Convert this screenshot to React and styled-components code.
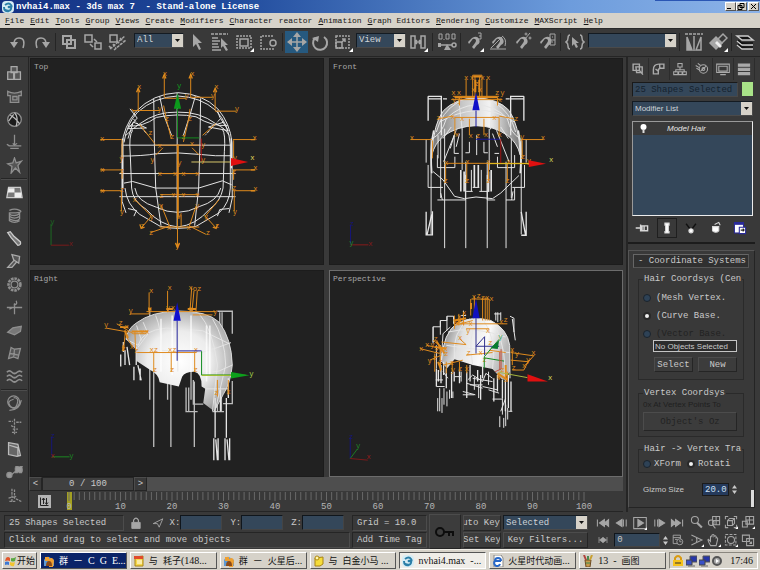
import React from "react";
import styled, { createGlobalStyle, css } from "styled-components";

const mono = '"Liberation Mono", "Noto Sans CJK SC", monospace';
const sans = '"Liberation Sans", Arial, sans-serif';
const serif = '"Liberation Serif", "Noto Sans CJK SC", serif';
const c = {
  panel: "#393939",
  dark: "#212121",
  edge: "#252525",
  lite: "#4c4c4c",
  text: "#c9c9c9",
  field: "#34475a",
  icon: "#a6a6a6",
  chrome: "#d6d2c9",
  wire: "#e6e6e6",
  orange: "#df8a1c",
};

const GlobalStyle = createGlobalStyle`
  *, *::before, *::after { box-sizing: border-box; }
  body { margin: 0; background: ${c.panel}; color: ${c.text}; font: 9px/12px ${mono}; }
  button, input, select { font: inherit; color: inherit; margin: 0; padding: 0; border: 0; border-radius: 0; background: none; min-width: 0; }
  svg { display: block; }
`;

const Page = styled.div`
  min-height: 100vh;
  display: flex;
  flex-direction: column;
`;

/* ---------- window title and menu ---------- */

const TitleBar = styled.header`
  height: 13px;
  display: flex;
  align-items: center;
  gap: 2px;
  padding: 0 1px 0 2px;
  color: #fff;
  font-weight: bold;
  background:
    linear-gradient(#2a56b4, #2a56b4) no-repeat right top / 105px 1px,
    linear-gradient(90deg, #143183 0%, #1f4a9c 30%, #4a78bf 55%, #6d9cdc 75%, #8cb3e8 100%);
`;
const TitleText = styled.h1`
  flex: 1;
  margin: 0;
  font-size: 9px;
  line-height: 12px;
  white-space: pre;
`;
const WindowButton = styled.button`
  width: 11px;
  height: 9px;
  background: ${c.chrome};
  color: #000;
  border: 1px solid;
  border-color: #fff #555 #555 #fff;
  margin-left: ${(p) => (p.$spaced ? 1 : 0)}px;
  margin-right: ${(p) => (p.$spaced ? 0 : -2)}px;
`;
const MenuBar = styled.nav`
  height: 15px;
  display: flex;
  align-items: center;
  gap: 6px;
  padding: 0 5px;
  background: ${c.chrome};
`;
const MenuItem = styled.button`
  color: #151515;
  font-size: 8px;
  line-height: 12px;
  white-space: pre;
  &::first-letter { text-decoration: ${(p) => (p.$plain ? "none" : "underline")}; }
`;

/* ---------- main toolbar ---------- */

const Toolbar = styled.div`
  height: 29px;
  display: flex;
  align-items: center;
  padding: 0 3px 2px 6px;
  background: ${c.panel};
  border-top: 1px solid #2a2a2a;
  border-bottom: 1px solid ${c.edge};
`;
const ToolButton = styled.button`
  flex: none;
  width: ${(p) => (p.$narrow ? 23 : 24)}px;
  height: 22px;
  display: grid;
  place-items: center;
  color: ${c.icon};
  background: ${(p) => (p.$active ? "#26597f" : "transparent")};
`;
const Divider = styled.span`
  flex: none;
  width: 1px;
  height: 18px;
  margin: 0 ${(p) => (p.$wide ? 2 : 1)}px;
  background: ${c.edge};
`;
const ComboWrap = styled.span`
  display: grid;
  flex: ${(p) => (p.$grow ? "1 1 0" : "none")};
  min-width: 0;
  width: ${(p) => (p.$width ? p.$width + "px" : "auto")};
  height: 15px;
  margin: ${(p) => (p.$gap ? "0 0 3px " + p.$gap + "px" : "0")};
  background: ${c.field};
  border: 1px solid;
  border-color: #141b22 #4a4a4a #4a4a4a #141b22;
  & > * { grid-area: 1 / 1; }
`;
const ComboSelect = styled.select`
  appearance: none;
  width: 100%;
  height: 13px;
  padding: 0 12px 0 2px;
  color: #cfd4d8;
  font: ${(p) => (p.$sans ? "8px/12px " + sans : "9px/12px " + mono)};
`;
const ComboArrow = styled.span`
  justify-self: end;
  width: 11px;
  height: 13px;
  display: grid;
  place-items: center;
  color: #111;
  background: ${c.chrome};
  pointer-events: none;
`;

function Combo({ label, value, ...rest }) {
  const { sansText, ...wrap } = rest;
  return (
    <ComboWrap {...wrap}>
      <ComboSelect aria-label={label} $sans={sansText} defaultValue={value}>
        <option>{value}</option>
      </ComboSelect>
      <ComboArrow>
        <svg width="5" height="3" viewBox="0 0 5 3"><path d="M0 0h5L2.5 3z" fill="currentColor" /></svg>
      </ComboArrow>
    </ComboWrap>
  );
}

function Icon({ size = 20, children, flyout, view = 20 }) {
  return (
    <svg width={size} height={size} viewBox={`0 0 ${view} ${view}`} fill="none" stroke="currentColor" strokeWidth="1.5">
      {children}
      {flyout && <path d="M20 16v4h-4z" fill="#fff" stroke="none" />}
    </svg>
  );
}

const magnet = <path d="M4 10l4-4q5-3 7 1t-2 6l-3 4-2-2 3-4q2-3 0-4t-3 1l-3 4z" fill="currentColor" stroke="none" />;
const cursor = <path d="M7 2v13l3-3 3 6 2-1-3-6h4z" fill="currentColor" stroke="none" />;

const tool = {
  undo: <Icon><path d="M15 16q3-10-4-10-5 0-5 6" /><path d="M2 10h8l-4 6z" fill="currentColor" stroke="none" /></Icon>,
  redo: <Icon><path d="M5 16Q2 6 9 6q5 0 5 6" /><path d="M10 10h8l-4 6z" fill="currentColor" stroke="none" /></Icon>,
  link: <Icon><path d="M4 4h8v8H4zM8 8h8v8H8z" strokeWidth="2" /></Icon>,
  unlink: <Icon><path d="M2 3h7v7H2zM12 11h6v6h-6z" /><path d="M11 7l3 3M7 12l3 3" /></Icon>,
  bind: <Icon><path d="M3 3h7v7H3z" /><path d="M3 17l15-13M7 18L19 8M2 14l3 3M6 12l3 4M10 9l3 3M13 6l3 3" strokeDasharray="3 1" /></Icon>,
  pick: <Icon>{cursor}</Icon>,
  byName: <Icon><path d="M1 2h17" strokeDasharray="3 1" /><path d="M2 6h6M2 9h8M2 12h6M2 15h7M2 18h9" /><path d="M11 6v10l2-2 3 5 2-1-3-5h3z" fill="currentColor" stroke="none" /></Icon>,
  region: <Icon flyout><path d="M3 4h14v12H3z" strokeDasharray="2 1" /><path d="M6 7h8v7H6z" /></Icon>,
  crossing: <Icon><path d="M15 4H3v13h13" strokeDasharray="2 1" /><circle cx="15" cy="11" r="3" /></Icon>,
  move: <Icon><path d="M10 3v14M3 10h14" /><path d="M10 0L6 5h8zM10 20l-4-5h8zM0 10l5-4v8zM20 10l-5-4v8z" fill="currentColor" stroke="none" /></Icon>,
  rotate: <Icon><path d="M14 5A7 7 0 1 1 5 6" strokeWidth="2" /><path d="M2 6l7-2-1 6z" fill="currentColor" stroke="none" /></Icon>,
  scale: <Icon flyout><path d="M3 4h13v12H3z" strokeDasharray="2 1" /><path d="M3 10h6v6H3zM8 11l4-4M12 10V7H9" /></Icon>,
  pivot: <Icon flyout><path d="M3 4h4v12H3zM13 4h4v12h-4zM7 10h6M9 8l-2 2 2 2M11 8l2 2-2 2" /></Icon>,
  manip: <Icon><path d="M2 2h3v5H2zM9 2h3v5H9zM15 2h3v5h-3zM7 7v1" strokeWidth="1" /><path d="M2 13h16" /><circle cx="17" cy="13" r="2" fill={c.panel} /><path d="M7 18l3-6 4 6zM1 11h3v4H1z" fill="currentColor" stroke="none" /></Icon>,
  snap: <Icon flyout><g>{magnet}</g><path d="M14 1h3v3h-2M17 4v3h-3" strokeWidth="1" /></Icon>,
  angle: <Icon>{magnet}<path d="M2 17h16M14 4q5 3 3 10M3 16L14 5" strokeWidth="1" /></Icon>,
  percent: <Icon>{magnet}<path d="M13 7l5-6" strokeWidth="1" /><circle cx="14" cy="2" r="1" strokeWidth="1" /><circle cx="18" cy="6" r="1" strokeWidth="1" /></Icon>,
  spinner: <Icon>{magnet}<path d="M14 2h5v11h-5zM14 8h5M16 5h1M16 10h1" strokeWidth="1" /></Icon>,
  named: <Icon><path d="M5 3Q3 3 3 6t-2 4q2 1 2 4t2 3M15 3q2 0 2 3t2 4q-2 1-2 4t-2 3" /><path d="M7 5v9l2-2 2 4 2-1-2-4h3z" fill="currentColor" stroke="none" /></Icon>,
  mirror: <Icon><path d="M1 2h18" strokeDasharray="3 1" /><path d="M10 4v15" /><path d="M3 5v13h5z" fill="currentColor" /><path d="M17 5v13h-5z" /></Icon>,
  align: <Icon flyout><path d="M2 11l6-6 6 6-6 6z" fill="currentColor" /><path d="M9 8l6-6 4 4-6 6z" /><path d="M7 11l5 5 2-2-5-5z" fill="#eee" stroke="none" /></Icon>,
  layers: <Icon><path d="M2 4h11l5 4H7zM2 9l5 4h11M2 13l5 4h11" fill="#111" stroke="#ccc" /><path d="M3 8l4 3h11M3 12l4 3h11" stroke="#111" /></Icon>,
};

/* ---------- workspace ---------- */

const Workspace = styled.main`
  flex: 1;
  display: flex;
  min-height: 0;
`;
const SideBar = styled.aside`
  flex: none;
  width: 29px;
  padding-top: 5px;
  display: flex;
  flex-direction: column;
  align-items: center;
  border-right: 1px solid ${c.edge};
  border-bottom: 1px solid ${c.edge};
`;
const SideButton = styled.button`
  width: 24px;
  height: 23px;
  display: grid;
  place-items: center;
  color: #8f8f8f;
`;
const SideDivider = styled.span`
  width: 26px;
  height: 2px;
  margin: 1px 0;
  border-top: 1px solid ${c.edge};
  border-bottom: 1px solid ${c.lite};
`;
const side = [
  ["Rigid bodies", <path d="M6 2h7v7H6zM2 8h7v9H2zM10 8h7v9h-7z" fill="#555" stroke="#aaa" />],
  ["Cloth", <path d="M2 4q8 4 16 0v5h-3v8H5V9H2zM8 10h5v4H8z" fill="#4a4a4a" />],
  ["Soft body", <><circle cx="10" cy="10" r="8" fill="#1b1b1b" /><path d="M10 2q5 5 2 16M5 5q5 2 11 10M3 12l6-8" stroke="#bbb" /></>],
  ["Rope", <path d="M10 1v13M3 14h15M5 17h10M8 11q2 3 5 0M1 12l3 2" />],
  ["Deforming mesh", <path d="M10 1l2 6 6-2-4 5 2 8-5-5-5 6 1-8-5-3 6-1z" fill="#555" />],
  null,
  ["Plane", <><path d="M3 4h14l2 12H1z" fill="#777" stroke="#ccc" /><path d="M3 5h7v5H2zM10 10h8v6h-8z" fill="#eee" stroke="none" /></>],
  ["Spring", <path d="M4 4q6-3 12 0t-12 3q0 3 6 3t6-4v8q-4 4-12 0M4 7v9q6 4 12 0M4 11q6 4 12 0" />],
  ["Dashpot", <path d="M2 3l3-1 4 5 8 7q1 4-3 4L6 9z" fill="#777" stroke="#ccc" />],
  ["Linear dashpot", <path d="M7 2l9 2-1 8-6-4zM10 8l-8 9h5l6-7" fill="#555" stroke="#aaa" />],
  ["Motor", <><circle cx="10" cy="10" r="7" strokeWidth="3" strokeDasharray="3 1" /><circle cx="10" cy="10" r="4" /></>],
  ["Wind", <path d="M1 10h18M10 5v13M12 2q2 5-3 5M4 12l4-2" />],
  ["Toy car", <path d="M2 12l6-5 10-2-1 6-7 4-5-2z" fill="#777" />],
  ["Fracture", <path d="M6 3l4 2 7-1-3 12-5-2-6 2zM5 10l10 2M10 5l-1 10" fill="#555" />],
  ["Water", <path d="M1 5q3-3 6 0t6 0 6 0M1 10q3-3 6 0t6 0 6 0M1 15q3-3 6 0t6 0 6 0" strokeWidth="2" />],
  null,
  ["Constraint solver", <><circle cx="9" cy="8" r="7" /><path d="M9 3q7 0 4 8t-8 2 4-8M4 18q12 0 14-12" /></>],
  ["Ragdoll", <path d="M10 1v18M3 4h5M12 5h6M6 9l4 2M8 13h6M7 17h6" strokeDasharray="3 1" />],
  ["Hinge", <path d="M3 2l11 2 3 13-4 1-10-2zM4 5l10 3v9" fill="#666" stroke="#bbb" />],
  ["Point to point", <><path d="M6 13l7-6" /><circle cx="4" cy="13" r="3" fill="#999" /><path d="M11 3h8v7h-8z" fill="#999" strokeDasharray="4 1" /></>],
  ["Prismatic", <path d="M7 2v16M10 3v10l8 4M3 13l9-2M4 17h7" strokeDasharray="3 1" />],
];

const Center = styled.section`
  flex: 1;
  min-width: 0;
  display: flex;
  flex-direction: column;
`;
const ViewGrid = styled.div`
  flex: 1;
  min-height: 0;
  display: grid;
  grid-template-columns: repeat(2, minmax(0, 1fr));
  grid-template-rows: repeat(2, minmax(200px, 1fr));
  gap: 5px;
  padding: 1px 0 0 1px;
`;
const Viewport = styled.figure`
  position: relative;
  contain: size;
  margin: 0;
  display: flex;
  background: ${c.dark};
  border: 1px solid ${(p) => (p.$active ? "#6c6c6c" : "#1c1c1c")};
`;
const ViewLabel = styled.figcaption`
  position: absolute;
  top: 2px;
  left: 3px;
  font-size: 8px;
  line-height: 12px;
  color: #a8a8a8;
`;
const Scene = styled.svg`
  flex: 1;
  min-width: 0;
  height: 100%;
  text { font: 22px ${mono}; stroke: none; }
`;

const Wire = ({ d, w = 3, ...rest }) => <path d={d} fill="none" stroke={c.wire} strokeWidth={w} {...rest} />;
const Orange = ({ d, w = 3 }) => <path d={d} fill="none" stroke={c.orange} strokeWidth={w} />;
const Marks = ({ list }) =>
  list.map(([x, y, t], i) => <text key={i} x={x} y={y} textAnchor="middle" fill={c.orange}>{t}</text>);
const Corner = ({ x, y, up, right, upColor, rightColor, upText, rightText }) => (
  <g>
    <path d={`M${x} ${y}v-${up}`} stroke={upColor} strokeWidth="3" />
    <path d={`M${x} ${y}h${right}`} stroke={rightColor} strokeWidth="3" />
    <text x={x + 4} y={y - up + 2} textAnchor="middle" fill={upColor}>{upText}</text>
    <text x={x + right + 6} y={y + 3} textAnchor="middle" fill={rightColor}>{rightText}</text>
  </g>
);

function TopScene() {
  return (
    <Scene viewBox="93 9 879 621" role="img" aria-label="Top wireframe">
      <Wire d="M378 475L366 440V270Q370 215 408 168Q460 114 535 111Q610 114 656 160Q694 205 699 262L700 430L690 475" />
      <Wire w={5} d="M368 250V400M697 250V340" />
      <Wire d="M372 262Q380 205 413 170Q465 124 535 121Q605 124 650 165Q690 205 694 270V400" />
      <Wire d="M378 240Q395 222 420 205Q470 168 535 170Q600 168 650 205Q680 220 690 240" />
      <Wire d="M384 212Q430 215 470 186Q535 172 590 184Q640 215 686 210" />
      <Wire d="M398 225Q386 240 391 300L395 400Q398 440 440 465Q480 512 535 518Q590 512 630 465Q665 440 672 400L676 290Q680 235 670 222" />
      <Wire d="M375 400Q380 450 420 480L482 516Q535 528 590 516L660 475Q692 445 694 400" />
      <Wire d="M405 400Q410 440 470 458Q535 490 600 456Q655 440 665 400" />
      <Wire d="M462 130L464 270L468 400L484 514M604 128L602 270L598 400L586 514M533 112V525" />
      <Wire d="M480 122L492 178L516 240M588 122L572 178L552 240" />
      <Wire d="M365 270H698M362 303Q430 303 470 296Q535 290 600 298Q650 304 696 302M358 356H710M358 426H710" />
      <Wire d="M372 385L398 380L468 400H598L670 378L698 390" />
      <Wire d="M390 160L412 188L384 220L440 218L400 200L384 250M655 165L662 185L688 226L628 215L675 200M384 462L410 468L402 485M655 485L662 465L690 462" />
      <Wire d="M400 190L445 240M664 190L618 240" strokeDasharray="12 4" />
      <Orange d="M415 165V100M398 165H480M494 125V62M494 128H560M574 125V62M574 125H640M648 165V105M648 167H712M395 160L405 172" />
      <Orange d="M365 253H306M365 345H306M365 408H306M702 253H768M702 345H768M702 408H768M366 255V310M366 345V372M364 408V470M704 255V310M704 345V375M706 408V470" />
      <Orange d="M492 150L500 190L515 250M572 160L566 200L552 260M465 270H600M468 300L490 278M600 300L578 278M420 208L465 265M650 205L610 240" />
      <Orange w={6} d="M535 268V490" />
      <Orange d="M478 356H600M482 420H600M534 480V575M405 435L455 485L425 520M660 435L618 485L650 520M484 450L510 515L452 535M590 455L570 515L620 540M480 518H600M545 515V480" />
      <Orange d="M410 110l5-12 5 12M489 68l5-12 5 12M569 68l5-12 5 12M643 110l5-12 5 12M300 253h14M300 345h14M300 408h14M756 253h14M756 345h14M756 408h14M528 566l6 14 6-14M420 510l4 12 10-4M655 510l-4 12-10-4" w={4} />
      <Marks list={[[418,100,"x"],[496,60,"x"],[579,60,"x"],[652,100,"x"],[480,168,"y"],[562,126,"y"],[641,126,"y"],[714,168,"y"],[306,256,"x"],[306,350,"x"],[306,414,"x"],[768,254,"x"],[770,346,"x"],[770,410,"x"],[364,318,"y"],[366,478,"y"],[708,314,"y"],[708,478,"y"],[502,198,"z"],[572,198,"z"],[452,240,"z"],[518,250,"z"],[552,252,"z"],[480,278,"x"],[578,272,"x"],[612,276,"y"],[458,322,"y"],[612,322,"y"],[540,330,"y"],[480,362,"x"],[526,362,"x"],[552,362,"x"],[594,362,"x"],[485,430,"z"],[522,428,"x"],[552,428,"x"],[594,428,"x"],[404,442,"x"],[484,460,"y"],[594,460,"y"],[456,494,"y"],[620,494,"y"],[428,522,"z"],[654,522,"z"],[454,542,"z"],[626,542,"z"],[508,526,"x"],[568,526,"x"],[534,582,"y"],[540,488,"y"],[366,354,"z"],[706,356,"z"],[366,412,"z"],[706,406,"z"]]} />
      <path d="M534 246V160M534 248H600" stroke="#138a1d" strokeWidth="3" />
      <path d="M534 112l11 48h-22z" fill="#0c9a1c" />
      <text x="539" y="96" textAnchor="middle" fill="#10a020">y</text>
      <path d="M606 320V250" stroke="#b01010" strokeWidth="3" />
      <path d="M576 321H694" stroke="#d8c76a" strokeWidth="3" />
      <path d="M748 321l-52-12v24z" fill="#e01010" />
      <text x="761" y="316" textAnchor="middle" fill="#e6dc5c">x</text>
      <Corner x={151} y={573} up={65} right={54} upColor="#1c6a22" rightColor="#7a1a1a" upText="y" rightText="x" />
    </Scene>
  );
}

function FrontScene() {
  return (
    <Scene viewBox="12 9 876 621" role="img" aria-label="Front shaded view">
      <defs>
        <linearGradient id="capFront" x1="0" x2="1">
          <stop offset="0" stopColor="#777" /><stop offset=".35" stopColor="#c8c8c8" /><stop offset=".65" stopColor="#f2f2f2" /><stop offset="1" stopColor="#777" />
        </linearGradient>
      </defs>
      <path d="M316 300Q322 200 352 165Q385 130 450 126Q520 130 550 165Q580 205 584 300Q575 262 545 240Q505 212 450 211Q395 212 352 242Q325 265 316 300z" fill="url(#capFront)" />
      <Wire d="M316 300Q322 200 352 165Q385 130 450 126Q520 130 550 165Q580 205 584 300M316 250Q345 240 360 190Q400 150 450 148Q510 150 545 190Q555 235 584 250M330 230Q345 170 395 140M570 230Q555 170 505 140M398 134L408 222M500 134L494 222M340 200Q390 170 450 165T566 200" />
      <Wire d="M316 300Q325 265 352 242Q395 212 450 211Q505 212 545 240Q575 262 584 300" />
      <Wire w={4} d="M305 122H345V240M305 130H345M350 130H362M305 122V196M595 122H555V240M595 130H555M552 130H540M595 122V196" />
      <Wire d="M299 252V323M602 252V323M305 330V398H350M597 330V398H560M335 240V310M333 300V338H386V305M567 300V338H515V305M314 250V540M587 250V540M343 250V430M557 250V430" />
      <Wire w={5} d="M322 225Q310 280 316 355M578 225Q590 280 584 355" />
      <Wire d="M355 220V582M419 320V582M484 320V582M541 320V582M320 350L350 375L385 425L415 432L450 427L500 432L525 415L580 362" />
      <Wire d="M333 436H418V360M343 415L348 436M484 360V436H508M541 436H567V400M562 410L558 436" />
      <Wire w={5} d="M404 345V410M496 345V410M445 330V398M457 330V398M414 350V410M488 350V410" />
      <Wire d="M436 345V410M466 345V410M420 410H440M460 410H490M440 398H460M350 250L375 215M548 250L525 215M352 320L390 225M550 320L512 225M408 220V345M490 220V345M372 280L384 240L384 295H398M430 260V293H418M474 260V293H486M520 295H506M400 235L390 275M500 235L515 275M452 240V300" />
      <Wire w={4} d="M299 472V542H318V470M302 540L316 480M587 472L600 542M602 472V543H587" />
      <Orange d="M420 122V70M440 125V58H468V125M483 122V70M447 125V60M461 125V60M380 122H520M375 132H530M385 186H520M400 125V150M515 125V150M335 190L380 182M565 190L520 182M316 253H252M588 253H655M318 256V310M590 256V310M360 325H610M358 325V380M422 325V380M488 325V380M545 325V380M386 186V240M430 190V240M474 190V240M520 186V240" />
      <Orange w={6} d="M385 125H515M442 62H466M448 72V110M460 72V110" />
      <Marks list={[[420,72,"x"],[487,72,"x"],[382,118,"x"],[398,118,"x"],[384,138,"y"],[400,138,"y"],[514,118,"z"],[530,118,"y"],[522,138,"x"],[438,74,"x"],[470,74,"x"],[452,90,"z"],[462,108,"x"],[442,108,"x"],[256,254,"x"],[653,254,"x"],[590,252,"y"],[336,194,"z"],[380,192,"x"],[408,196,"x"],[506,194,"x"],[572,196,"z"],[392,244,"x"],[434,248,"x"],[456,248,"z"],[480,246,"x"],[522,246,"x"],[360,330,"x"],[424,328,"x"],[488,328,"x"],[548,328,"x"],[610,324,"y"],[358,386,"z"],[423,386,"z"],[488,386,"z"],[545,386,"z"],[592,312,"z"]]} />
      <path d="M450 215V165M450 252H522" stroke="#1818a0" strokeWidth="3" />
      <path d="M450 110l11 54h-22z" fill="#1010c8" />
      <path d="M525 325V252" stroke="#a01010" strokeWidth="3" />
      <path d="M488 326H612" stroke="#e8c21c" strokeWidth="3" />
      <path d="M662 326l-52-10v20z" fill="#e01010" />
      <text x="678" y="320" textAnchor="middle" fill="#d8dc5c">x</text>
      <Corner x={70} y={572} up={58} right={54} upColor="#14147a" rightColor="#8a1a1a" upText="z" rightText="x" />
      <text x="73" y="571" textAnchor="middle" fill="#1c8a2a">y</text>
    </Scene>
  );
}

function RightScene() {
  return (
    <Scene viewBox="93 15 879 621" role="img" aria-label="Right shaded view">
      <defs>
        <radialGradient id="capRight" cx=".5" cy=".5" r=".6">
          <stop offset="0" stopColor="#fff" /><stop offset=".5" stopColor="#ececec" /><stop offset=".85" stopColor="#b0b0b0" /><stop offset="1" stopColor="#858585" />
        </radialGradient>
      </defs>
      <Wire w={4} d="M450 130V405M504 130V405M575 130V405M462 320V548M514 320V548M585 350V548M560 368V441H595M568 368V440M582 345V418H612M655 137H700V205M662 140V205M669 140V205M700 348V417H672M640 441H675M655 380V441M667 385V441" stroke="#bdbdbd" />
      <path d="M378 222Q382 190 410 172Q455 138 535 136Q625 136 660 170Q698 220 700 300Q695 355 672 390L645 440L612 415L618 372L607 365Q608 325 585 320Q556 320 548 335L538 365L480 352Q478 328 448 313L410 288V255z" fill="url(#capRight)" />
      <Wire d="M378 222Q382 190 410 172Q455 138 535 136Q625 136 660 170Q698 220 700 300Q695 355 672 390L645 440M378 222L415 240Q425 195 500 188L610 196L690 235M468 150Q485 190 485 255M535 136V320M600 145Q640 190 655 300L640 440M640 160Q678 220 680 300L650 430M410 262H480M480 255L607 262L655 247L696 232M607 325L660 318L700 300M618 372L690 372M430 170L445 205L415 245M410 180L425 225" opacity=".9" />
      <Wire w={5} d="M484 160V320M518 150V330M575 150V320M632 180V330M622 180V350" stroke="#fff" opacity=".7" />
      <Wire w={4} d="M370 230V260M362 268V304M375 255V300M381 245L389 300M402 305V346M409 245V300M414 300L424 346M421 310V346M648 400V520M644 522V588M650 525L655 588M657 522V588M682 400V520M678 522V588M684 525L690 588M692 522V588M688 340V400M664 375V440" />
      <Orange d="M448 145V80M504 140V75M572 135L577 65M578 137L584 75M590 137L594 75M448 145H390M385 200L318 188M440 138H650M580 148H640M376 200L370 258M405 200L407 255M350 175L400 205L440 205M412 262H592M462 262V320M515 262V320M586 262V320M380 215L395 240M655 345V395M688 345V390" />
      <Orange w={6} d="M374 195L384 218M565 130H590M370 240V255M445 130H455M500 130H520M360 185H385M395 198H445" />
      <Marks list={[[454,82,"x"],[510,72,"x"],[574,72,"x"],[587,76,"o"],[600,76,"z"],[392,142,"y"],[318,186,"y"],[362,178,"z"],[380,192,"x"],[370,256,"z"],[396,250,"x"],[450,136,"x"],[506,134,"y"],[520,132,"x"],[575,136,"x"],[648,144,"y"],[428,206,"x"],[442,206,"x"],[410,262,"z"],[456,260,"x"],[469,260,"z"],[512,260,"x"],[525,260,"z"],[590,260,"x"],[466,320,"z"],[518,320,"z"],[589,320,"z"],[688,388,"x"],[652,392,"z"]]} />
      <path d="M533 287V165M533 257H607" stroke="#22229a" strokeWidth="3" />
      <path d="M533 110l11 56h-22z" fill="#1010d0" />
      <path d="M607 258V330H700" stroke="#0d8a1d" strokeWidth="3" fill="none" />
      <path d="M607 331H740" stroke="#a8c020" strokeWidth="3" />
      <path d="M752 331l-56-10v20z" fill="#0ca01c" />
      <text x="758" y="332" textAnchor="middle" fill="#a8d84c">y</text>
      <Corner x={153} y={578} up={60} right={54} upColor="#16167a" rightColor="#1c8a22" upText="z" rightText="y" />
      <text x="156" y="580" textAnchor="middle" fill="#9a1a1a">x</text>
    </Scene>
  );
}

function PerspectiveScene() {
  return (
    <Scene viewBox="12 15 876 621" role="img" aria-label="Perspective shaded view">
      <defs>
        <linearGradient id="capPersp" x1="0" x2="1" y2=".3">
          <stop offset="0" stopColor="#6c6c6c" /><stop offset=".35" stopColor="#e0e0e0" /><stop offset=".7" stopColor="#fafafa" /><stop offset="1" stopColor="#b8b8b8" />
        </linearGradient>
      </defs>
      <path d="M345 290Q350 200 395 172Q440 150 495 165Q545 190 552 240L553 320L530 345L500 312L440 300L385 282L362 310z" fill="url(#capPersp)" />
      <Wire d="M345 290Q350 200 395 172Q440 150 495 165Q545 190 552 240L553 340M360 240Q420 250 552 262M385 282Q375 200 430 160M440 300Q425 220 450 160M500 312Q515 220 470 160M365 200Q440 180 540 215M372 185L350 205L345 290M535 345Q545 260 510 185" />
      <Wire d="M320 230V184H342V165H362V152H382M320 184V235M342 165V208M362 152V195M382 152V175M412 135V175M405 150H420M510 140V165M516 140V170M525 140V165M505 145H525M553 152L565 158V200M560 160L569 225M330 240V310M342 240V320" />
      <Wire w={4} d="M330 310V365M336 315V350M344 300V355M360 310V370M352 290V330M376 320V400M384 320V350M400 310V355M422 320V400M432 300V350M455 315V350M464 330V405M470 300V340M504 340V410M515 330V380M530 345V400M539 340V440M548 330V430M556 350V440" />
      <Wire d="M334 400V440M340 370V440M347 400V445M353 370V420M362 380V425M370 375V402M380 380V400M522 455V488M530 400V450M534 460V490M540 420V485M546 430V465M328 345H350M330 365H355M410 380L448 390M422 355L470 370M440 340L500 350M470 365L515 375M500 403H530M425 345L440 330L470 350L480 325L500 340M385 335H405M405 320V350" />
      <Wire d="M410 390H445M432 360H470M488 375L520 385M445 335V375M458 360V400M488 320V360M365 340L350 320M525 440L540 400M548 440H560" />
      <Orange d="M434 150V100M445 150V92M470 165V95M478 165V95M484 165V95M490 165V100M436 100H490M385 190V150M398 180V145M412 180V140M385 180L440 165M400 175L545 175M420 190H490M280 250L340 265M300 240L345 250M320 225L345 245M310 285L345 270M325 265V320M342 250V320M360 290V325M378 290V320M400 290V320M422 300V325M345 230L420 238L400 220M350 300L410 285M420 270L470 265L500 262M555 262L625 272M555 285L610 290M560 315L595 315L610 285M600 300L628 268M560 255V300M545 320V350M520 320V345M490 255L540 262" />
      <Orange w={6} d="M330 228L355 265M325 245L360 250M385 165L420 158M335 290L345 315M435 112V130M540 300V340M515 325L545 345M390 175L405 165" />
      <Marks list={[[444,100,"x"],[458,98,"z"],[471,102,"z"],[484,102,"x"],[497,106,"x"],[386,172,"y"],[400,160,"x"],[414,148,"x"],[410,178,"x"],[434,182,"x"],[426,204,"y"],[486,204,"x"],[526,176,"x"],[540,170,"z"],[284,258,"x"],[302,244,"x"],[318,246,"y"],[328,228,"z"],[330,262,"z"],[344,264,"x"],[358,256,"x"],[326,284,"z"],[310,294,"y"],[342,298,"z"],[360,272,"z"],[376,300,"z"],[380,320,"y"],[402,318,"z"],[422,318,"x"],[402,224,"x"],[428,270,"z"],[464,270,"x"],[476,292,"z"],[494,238,"z"],[560,260,"x"],[574,272,"y"],[624,270,"x"],[608,290,"y"],[596,308,"x"],[564,316,"z"],[530,322,"z"],[518,342,"x"],[540,352,"z"]]} />
      <path d="M450 265V158M450 243H520M450 243L476 214V270" stroke="#30308c" strokeWidth="3" fill="none" />
      <path d="M450 98l11 60h-22z" fill="#1010c0" />
      <path d="M475 310V275L500 245L520 222M475 278L535 288" stroke="#10881c" strokeWidth="3" fill="none" />
      <path d="M520 225l-4 26-22-2z" fill="#067a30" />
      <path d="M526 252V312L508 320M522 260V315" stroke="#c05040" strokeWidth="3" fill="none" />
      <path d="M520 322L606 338" stroke="#a8b840" strokeWidth="3" />
      <path d="M668 350l-62-22v22z" fill="#e01010" />
      <text x="675" y="345" textAnchor="middle" fill="#d8dc5c">x</text>
      <text x="524" y="220" textAnchor="middle" fill="#30a048">y</text>
      <path d="M69 583V520" stroke="#16167a" strokeWidth="3" />
      <path d="M69 583L90 555" stroke="#1c7a26" strokeWidth="3" />
      <path d="M69 583L122 588" stroke="#7a1a1a" strokeWidth="3" />
      <text x="72" y="524" textAnchor="middle" fill="#16167a">z</text>
      <text x="93" y="552" textAnchor="middle" fill="#1c8a26">y</text>
      <text x="125" y="584" textAnchor="middle" fill="#9a1a1a">x</text>
    </Scene>
  );
}

/* ---------- time slider and track bar ---------- */

const TimeRow = styled.div`
  height: 14px;
  display: flex;
  background: #4e4e4e;
`;
const TimeStep = styled.button`
  width: 13px;
  background: ${c.panel};
  border: 1px solid;
  border-color: ${c.lite} ${c.edge} ${c.edge} ${c.lite};
`;
const TimeThumb = styled.output`
  width: 92px;
  text-align: center;
  line-height: 12px;
  background: #404040;
  border: 1px solid ${c.edge};
`;
const TimeTrack = styled.input`
  appearance: none;
  flex: 1;
  &::-webkit-slider-thumb { appearance: none; width: 1px; height: 1px; }
`;
const TrackBar = styled.div`
  height: 21px;
  display: flex;
  align-items: flex-start;
  gap: 18px;
  padding: 0 39px 0 9px;
  border-bottom: 1px solid ${c.edge};
`;
const CurveButton = styled.button`
  flex: none;
  width: 13px;
  height: 13px;
  margin-top: 4px;
  display: grid;
  place-items: center;
  color: #222;
  background: #b4b4b4;
`;
const Ruler = styled.svg`
  flex: 1;
  min-width: 0;
  height: 20px;
  overflow: visible;
  text { font: 9px ${mono}; fill: #b5b5b5; }
`;

function TrackRuler() {
  return (
    <Ruler role="img" aria-label="Frames 0 to 100">
      <rect x="-2" y="1" width="5" height="18" fill="#a3a022" />
      {Array.from({ length: 101 }, (_, i) => (
        <line key={i} x1={`${i}%`} x2={`${i}%`} y1="1" y2={i % 10 === 0 ? 10 : 9} stroke="#686868" />
      ))}
      {Array.from({ length: 11 }, (_, i) => (
        <text key={i} x={`${i * 10}%`} y="18" textAnchor="middle">{i * 10}</text>
      ))}
    </Ruler>
  );
}

/* ---------- command panel ---------- */

const CommandPanel = styled.aside`
  flex: none;
  width: 134px;
  margin-left: 3px;
  padding: 1px 5px 0 0;
  border-left: 2px solid ${c.edge};
  display: flex;
  flex-direction: column;
`;
const Tabs = styled.div`
  display: grid;
  grid-template-columns: repeat(6, 1fr);
  height: 22px;
`;
const Tab = styled.button`
  display: grid;
  place-items: center;
  color: #aaa;
  border-right: 1px solid #2c2c2c;
`;
const ObjectRow = styled.div`
  display: flex;
  gap: 4px;
  padding: 2px 2px 0 4px;
`;
const NameInput = styled.input`
  flex: 1;
  height: 15px;
  padding: 0 2px;
  color: #15222e;
  background: ${c.field};
  border: 1px solid;
  border-color: #1a1a1a #484848 #484848 #1a1a1a;
`;
const Swatch = styled.button`
  width: 11px;
  height: 14px;
  background: #a9e388;
`;
const Padded = styled.div`
  padding: 4px 2px 0 4px;
  display: grid;
`;
const StackList = styled.ul`
  height: 95px;
  margin: 5px 2px 0 4px;
  padding: 0;
  list-style: none;
  background: ${c.field};
  border: 1px solid;
  border-color: #999 #ececec #ececec #999;
`;
const StackItem = styled.li`
  height: 13px;
  display: flex;
  align-items: center;
  padding-left: 7px;
  gap: 20px;
  font: italic 8px/12px ${sans};
  color: #e4e4e4;
  background: ${c.panel};
`;
const StackTools = styled.div`
  display: flex;
  justify-content: space-between;
  padding: 2px 5px 0 4px;
  height: 28px;
  border-bottom: 2px solid #1c1c1c;
`;
const StackTool = styled.button`
  width: 20px;
  height: 20px;
  display: grid;
  place-items: center;
  color: #d8d8d8;
  border: 1px solid ${(p) => (p.$on ? "#1f1f1f" : "transparent")};
`;
const RolloutArea = styled.div`
  flex: 1;
  display: flex;
  align-items: flex-end;
  margin: 6px 0 4px;
  border: 1px solid;
  border-color: #555 #242424 #242424 #555;
`;
const Rollout = styled.section`
  flex: 1;
  min-width: 0;
  align-self: stretch;
  padding: 3px 2px 0 4px;
`;
const RolloutTitle = styled.button`
  width: 100%;
  height: 14px;
  padding-left: 4px;
  text-align: left;
  line-height: 12px;
  white-space: pre;
  overflow: hidden;
  background: #303030;
  border: 1px solid;
  border-color: #666 #555 #555 #666;
`;
const Group = styled.fieldset`
  min-width: 0;
  margin: ${(p) => p.$top}px 5px 0;
  padding: 0 6px ${(p) => p.$bottom}px 4px;
  border: 1px solid #2a2a2a;
  display: flex;
  flex-direction: column;
`;
const Legend = styled.legend`
  padding: 0 1px;
  white-space: nowrap;
  line-height: 12px;
`;
const Choices = styled.div`
  display: flex;
  flex-direction: ${(p) => (p.$inline ? "row" : "column")};
  gap: 6px;
  padding-top: ${(p) => (p.$inline ? 3 : 7)}px;
`;
const Choice = styled.label`
  display: flex;
  align-items: center;
  gap: ${(p) => (p.$tight ? 3 : 5)}px;
  line-height: 12px;
  white-space: nowrap;
  color: ${(p) => (p.$off ? "#222" : c.text)};
`;
const Radio = styled.input`
  appearance: none;
  flex: none;
  width: 8px;
  height: 8px;
  border-radius: 50%;
  border: 1px solid #1a232c;
  background: #2e4256;
  &:checked { border: 2px solid #292929; background: #f0f0f0; }
`;
const PickedInput = styled.input`
  width: 84px;
  height: 12px;
  align-self: flex-end;
  padding: 0 1px;
  font: 8px/10px ${sans};
  background: #2c2c2c;
  border: 1px solid #c4c4c4;
`;
const ButtonPair = styled.div`
  display: grid;
  grid-template-columns: 1fr 1fr;
  gap: 5px;
  margin: 5px 0 0 11px;
`;
const bevel = css`
  background: #3c3c3c;
  border: 1px solid;
  border-color: ${c.lite} ${c.edge} ${c.edge} ${c.lite};
`;
const PushButton = styled.button`
  ${bevel}
  height: ${(p) => (p.$tall ? 19 : 15)}px;
  line-height: 12px;
  padding: 0 1px;
  color: ${(p) => (p.disabled ? "#232323" : c.text)};
  white-space: nowrap;
  overflow: hidden;
`;
const SmallNote = styled.span`
  margin-bottom: 1px;
  font: 8px/12px ${sans};
  color: #202020;
  white-space: nowrap;
`;
const GizmoRow = styled.label`
  display: flex;
  align-items: center;
  margin: 10px 12px 0 10px;
  font: 8px/12px ${sans};
`;
const GizmoInput = styled.input`
  width: 27px;
  height: 13px;
  margin-left: auto;
  margin-right: 3px;
  padding-left: 2px;
  font: 9px/12px ${mono};
  color: #cfe0f4;
  background: #253a5c;
  border: 1px solid #1b1b1b;
`;
const ScrollThumb = styled.span`
  width: 3px;
  height: 17px;
  background: #dcdcdc;
`;

const Spin = () => (
  <svg width="5" height="9" viewBox="0 0 5 9" fill={c.text}><path d="M0 3.5h5L2.5 0zM0 5.5h5L2.5 9z" /></svg>
);

const tabIcons = [
  ["Create", <path d="M3 3h9v9H3zM7 7h9v8H8zM12 12l5 6" strokeWidth="2" />],
  ["Modify", <path d="M2 16v-5q0-8 8-8h7v6h-5q-3 0-3 4v4H2zM5 10l4 3M11 4v5" strokeWidth="2" />],
  ["Hierarchy", <path d="M7 2h6v5H7zM10 7v5M4 15v-4h12v4M1 14h6v4H1zM8 14h5v4H8zM14 14h5v4h-5z" />],
  ["Motion", <><circle cx="12" cy="10" r="6" /><circle cx="12" cy="10" r="2" /><path d="M1 5l5 3M2 9l4 2M4 2l4 3M8 13l8-7" /></>],
  ["Display", <path d="M1 3h18v12H1zM4 6h12v7H4zM6 18h8" />],
  ["Utilities", <path d="M2 3h16v3H2zM2 9h16v3H2zM2 15h16v3H2z" fill="currentColor" />],
];

/* ---------- status area ---------- */

const StatusArea = styled.footer`
  flex: none;
  height: 37px;
  display: flex;
  gap: 2px;
  padding: 2px 4px 0;
`;
const StatusMain = styled.div`
  flex: 1;
  min-width: 0;
  display: grid;
  grid-template-rows: 17px 16px;
  gap: 1px;
`;
const StatusRow = styled.div`
  display: flex;
  align-items: center;
  gap: 2px;
  min-width: 0;
`;
const Readout = styled.span`
  ${(p) => (p.$grow ? "flex: 1 1 0;" : "flex: none;")}
  min-width: 0;
  width: ${(p) => p.$width || 0}px;
  height: 16px;
  padding-left: 4px;
  line-height: 14px;
  white-space: nowrap;
  overflow: hidden;
  background: ${c.panel};
  border: 1px solid;
  border-color: ${c.edge} ${c.lite} ${c.lite} ${c.edge};
`;
const PlainButton = styled.button`
  flex: none;
  width: ${(p) => p.$w || 20}px;
  height: 16px;
  display: grid;
  place-items: center;
  color: ${c.icon};
`;
const Coord = styled.label`
  flex: none;
  display: flex;
  align-items: center;
  margin-right: 6px;
`;
const CoordInput = styled.input`
  width: 42px;
  height: 15px;
  background: ${c.field};
  border: 1px solid;
  border-color: #10161c #444 #444 #10161c;
`;
const KeyButton = styled.button`
  flex: none;
  width: 32px;
  display: grid;
  place-items: center;
  color: #0d0d0d;
  ${bevel}
`;
const KeyGrid = styled.div`
  flex: none;
  display: grid;
  grid-template-columns: 38px 85px;
  grid-template-rows: 17px 16px;
  gap: 1px 2px;
  align-items: center;
`;
const FlatButton = styled.button`
  ${bevel}
  height: 16px;
  line-height: 12px;
  overflow: hidden;
  white-space: nowrap;
  display: flex;
  align-items: center;
  justify-content: ${(p) => (p.$clipStart ? "flex-end" : "center")};
`;
const Transport = styled.div`
  flex: none;
  width: 96px;
  padding-left: 4px;
  display: grid;
  grid-template-rows: 17px 16px;
  gap: 1px;
`;
const TransportRow = styled.div`
  display: flex;
  align-items: center;
  justify-content: space-between;
`;
const FrameInput = styled.input`
  width: 46px;
  height: 14px;
  padding-left: 2px;
  background: ${c.field};
  border: 1px solid;
  border-color: #10161c #444 #444 #10161c;
`;
const NavGrid = styled.div`
  flex: none;
  display: grid;
  grid-template-columns: repeat(4, 17px);
  grid-template-rows: 17px 16px;
  gap: 1px 0;
`;

const nav = [
  ["Zoom", <><circle cx="7" cy="7" r="5" /><path d="M10 11l7 7" strokeWidth="3" /></>],
  ["Zoom all", <><path d="M8 2h10v12H8zM8 8h10M13 2v12" /><circle cx="6" cy="11" r="4" /><path d="M8 14l4 5" /></>],
  ["Zoom extents", <path d="M2 6V2h4M14 2h4v4M18 14v4h-4M6 18H2v-4M5 8l3-3h7v7l-3 3H5zM5 8h7v7M12 8l3-3" />, true],
  ["Zoom extents all", <path d="M7 2h11v11H7zM7 7h11M12 2v11M2 9h7v8H2z" />, true],
  ["Field of view", <path d="M2 3l15 7-15 7M2 10h2M9 7q2 3 0 6" />, true],
  ["Pan", <path d="M5 18q-5-9-3-9l3 3V5q2-2 2 1V3q2-2 3 0v2q2-2 3 0v2q3-1 2 3l-2 8z" />, true],
  ["Arc rotate", <><path d="M2 2h15v15H2z" strokeDasharray="4 2" /><circle cx="10" cy="10" r="5" /></>, true],
  ["Maximize viewport", <path d="M2 3h10v9H2zM8 8h10v10H8zM11 11l4 4M15 12v3h-3" />],
];

const play = {
  start: "M2 5v10M5 10l7-5v10zM12 10l6-5v10z",
  prev: "M2 10l8-5v10zM12 5v10M16 5v10",
  next: "M18 10l-8-5v10zM8 5v10M4 5v10",
  end: "M18 5v10M15 10L8 5v10zM8 10L2 5v10z",
};
const PlayIcon = ({ d, size = 14 }) => <Icon size={size}><path d={d} fill="currentColor" /></Icon>;

/* ---------- desktop task bar ---------- */

const TaskBar = styled.footer`
  flex: none;
  height: 21px;
  display: flex;
  align-items: center;
  gap: 3px;
  padding: 1px 2px 0;
  background: ${c.chrome};
  color: #111;
  border-top: 1px solid #efece5;
  font: 10px/14px ${serif};
`;
const TaskButton = styled.button`
  flex: ${(p) => (p.$start ? "none" : "1 1 0")};
  width: ${(p) => (p.$start ? "35px" : "auto")};
  height: 17px;
  display: flex;
  align-items: center;
  gap: ${(p) => (p.$start ? 1 : 4)}px;
  padding: 0 2px;
  overflow: hidden;
  white-space: pre;
  color: ${(p) => (p.$tone === "alert" ? "#fff" : "#111")};
  background: ${(p) => (p.$tone === "alert" ? "#0b2468" : p.$tone === "open" ? "#efede8" : c.chrome)};
  border: 1px solid;
  border-color: ${(p) => (p.$tone === "open" ? "#555 #fff #fff #555" : "#fff #555 #555 #fff")};
  svg { flex: none; }
`;
const Han = styled.span`
  font: 9px/14px "Noto Sans CJK SC", sans-serif;
`;
const Tray = styled.div`
  flex: none;
  width: 89px;
  height: 17px;
  display: flex;
  align-items: center;
  gap: 2px;
  padding: 0 4px 0 2px;
  border: 1px solid;
  border-color: #8a877f #fff #fff #8a877f;
`;
const Clock = styled.time`
  margin-left: auto;
`;

const withHan = (text) =>
  text.split(/([\u4e00-\u9fff]+)/).map((part, i) => (i % 2 ? <Han key={i}>{part}</Han> : part));

const MaxLogo = ({ size = 12 }) => (
  <svg width={size} height={size} viewBox="0 0 12 12">
    <rect width="12" height="12" rx="4" fill="#d6ecf4" />
    <path d="M3 4q4-3 6 0T6 6q4-1 3 2t-6 1M2 6q0 5 5 4" fill="none" stroke="#2b7fa8" strokeWidth="2" />
  </svg>
);
const taskIcons = {
  people: <svg width="12" height="12" viewBox="0 0 12 12"><path d="M1 11V5q2-4 5-3l5 3v6z" fill="#5d9bd6" /><path d="M2 2h4v4H2zM6 4q4-3 5 2l-1 6H6z" fill="#f0a030" /><path d="M3 11q0-5 3-5t3 5z" fill="#8b4a18" /></svg>,
  note: <svg width="12" height="12" viewBox="0 0 12 12"><path d="M2 2l8-1v10H2z" fill="#f7d94c" stroke="#a88414" /><path d="M1 1h9v3H1z" fill="#e04a2a" /><path d="M4 6h5M4 8h5" stroke="#fff" /></svg>,
  pad: <svg width="12" height="12" viewBox="0 0 12 12"><path d="M2 3l8-1v7l-3 2H2z" fill="#f5dc3a" stroke="#a88414" /><circle cx="4" cy="3" r="2" fill="#fff6b0" stroke="#b08a10" /></svg>,
  web: <svg width="12" height="12" viewBox="0 0 12 12"><path d="M2 0h7l2 3v9H2z" fill="#fff" stroke="#888" /><path d="M9 6H3a3 3 0 1 0 5 3M3 6a3 3 0 0 1 6 0" fill="none" stroke="#2868c8" strokeWidth="2" /></svg>,
  paint: <svg width="12" height="12" viewBox="0 0 12 12"><path d="M3 5h6l-1 7H4z" fill="#c79a4a" stroke="#6c4a20" /><path d="M4 5L2 0" stroke="#b0443c" strokeWidth="2" /><path d="M6 5V1" stroke="#4a8a50" strokeWidth="2" /><path d="M8 5l2-5" stroke="#c8a030" strokeWidth="2" /><path d="M4 8h4" stroke="#3a8a50" /></svg>,
  flag: <svg width="11" height="12" viewBox="0 0 11 12"><path d="M1 3q2-2 4 0v3Q3 5 0 6z" fill="#e2562a" /><path d="M6 3q2 1 5-1l-1 4q-2 1-4 0z" fill="#58a840" /><path d="M0 7q2-1 4 0v3q-2-1-4 0z" fill="#3c78d4" /><path d="M5 7q3 1 5 0l-1 4q-2 1-4-1z" fill="#f2c430" /></svg>,
};
const tasks = [
  ["people", "群  －  C  G  E...", "alert"],
  ["note", "与  耗子(148..."],
  ["people", "群  －  火星后..."],
  ["pad", "与  白金小马 ..."],
  ["max", "nvhai4.max  -...", "open"],
  ["web", "火星时代动画..."],
  ["paint", "13  -  画图"],
];
const NetIcon = () => (
  <svg width="11" height="12" viewBox="0 0 11 12"><path d="M4 1h7v6H4z" fill="#2636a8" stroke="#555" /><path d="M0 5h6v5H0z" fill="#3950c8" stroke="#444" /><path d="M2 11h7" stroke="#666" /></svg>
);

const menus = ["File", "Edit", "Tools", "Group", "Views", "Create", "Modifiers", "Character", "reactor", "Animation", "Graph Editors", "Rendering", "Customize", "MAXScript", "Help"];

const Tool = ({ name, label, ...rest }) => <ToolButton type="button" aria-label={label} {...rest}>{tool[name]}</ToolButton>;

export default function App() {
  return (
    <Page>
      <GlobalStyle />
      <TitleBar>
        <MaxLogo />
        <TitleText>{"nvhai4.max - 3ds max 7  - Stand-alone License"}</TitleText>
        <WindowButton aria-label="Minimize"><svg width="9" height="7"><path d="M1 5.5h4" stroke="#000" /></svg></WindowButton>
        <WindowButton aria-label="Restore"><svg width="9" height="7"><path d="M3 .5h4v4H3zM1 2.5h4v4H1z" fill="none" stroke="#000" /></svg></WindowButton>
        <WindowButton aria-label="Close" $spaced><svg width="9" height="7"><path d="M2 1l5 5M7 1L2 6" stroke="#000" /></svg></WindowButton>
      </TitleBar>
      <MenuBar aria-label="Main menu">
        {menus.map((m) => <MenuItem key={m} type="button" $plain={m === "reactor"}>{m}</MenuItem>)}
      </MenuBar>
      <Toolbar>
        <Tool name="undo" label="Undo" />
        <Tool name="redo" label="Redo" />
        <Divider />
        <Tool name="link" label="Select and link" />
        <Tool name="unlink" label="Unlink selection" />
        <Tool name="bind" label="Bind to space warp" />
        <Combo label="Selection filter" value="All" $width={50} $gap={5} />
        <Tool name="pick" label="Select object" />
        <Tool name="byName" label="Select by name" />
        <Tool name="region" label="Selection region" />
        <Tool name="crossing" label="Window or crossing" />
        <Divider $wide />
        <Tool name="move" label="Select and move" $active $narrow />
        <Tool name="rotate" label="Select and rotate" $narrow />
        <Tool name="scale" label="Select and scale" $narrow />
        <Combo label="Reference coordinate system" value="View" $width={50} $gap={2} />
        <Tool name="pivot" label="Use pivot center" />
        <Divider $wide />
        <Tool name="manip" label="Select and manipulate" />
        <Divider />
        <Tool name="snap" label="Snaps toggle" />
        <Tool name="angle" label="Angle snap" />
        <Tool name="percent" label="Percent snap" />
        <Tool name="spinner" label="Spinner snap" />
        <Divider $wide />
        <Tool name="named" label="Edit named selections" $narrow />
        <Combo label="Named selection sets" value="" $grow $gap={2} />
        <Divider $wide />
        <Tool name="mirror" label="Mirror" />
        <Tool name="align" label="Align" />
        <Divider />
        <Tool name="layers" label="Layer manager" />
      </Toolbar>

      <Workspace>
        <SideBar aria-label="reactor tools">
          {side.map((s, i) =>
            s ? (
              <SideButton key={i} type="button" aria-label={s[0]}><Icon size={17}>{s[1]}</Icon></SideButton>
            ) : (
              <SideDivider key={i} />
            )
          )}
        </SideBar>

        <Center>
          <ViewGrid>
            <Viewport><TopScene /><ViewLabel>Top</ViewLabel></Viewport>
            <Viewport><FrontScene /><ViewLabel>Front</ViewLabel></Viewport>
            <Viewport><RightScene /><ViewLabel>Right</ViewLabel></Viewport>
            <Viewport $active><PerspectiveScene /><ViewLabel>Perspective</ViewLabel></Viewport>
          </ViewGrid>
          <TimeRow>
            <TimeStep type="button">&lt;</TimeStep>
            <TimeThumb>0 / 100</TimeThumb>
            <TimeStep type="button">&gt;</TimeStep>
            <TimeTrack type="range" min="0" max="100" defaultValue="0" aria-label="Current frame" />
          </TimeRow>
          <TrackBar>
            <CurveButton type="button" aria-label="Open mini curve editor">
              <svg width="9" height="9" viewBox="0 0 9 9" fill="none" stroke="currentColor"><path d="M.5.5v8h8M3.5 7V1M2 3l1.500-2L5 3M6.500 1v6M5 5.500L6.500 7.500 8 5.500" /></svg>
            </CurveButton>
            <TrackRuler />
          </TrackBar>
        </Center>

        <CommandPanel>
          <Tabs>
            {tabIcons.map(([label, art]) => (
              <Tab key={label} type="button" aria-label={label}><Icon size={14}>{art}</Icon></Tab>
            ))}
          </Tabs>
          <ObjectRow>
            <NameInput aria-label="Object name" defaultValue="25 Shapes Selected" />
            <Swatch type="button" aria-label="Object color" />
          </ObjectRow>
          <Padded><Combo label="Modifiers" value="Modifier List" sansText /></Padded>
          <StackList>
            <StackItem>
              <svg width="7" height="9" viewBox="0 0 7 9"><circle cx="3.500" cy="3" r="3" fill="#fff" /><path d="M3.500 5v4" stroke="#ddd" strokeWidth="2" /></svg>
              Model Hair
            </StackItem>
          </StackList>
          <StackTools>
            <StackTool type="button" aria-label="Pin stack"><Icon size={14}><path d="M1 10h7M8 5v10M10 7h8v7h-8zM13 7v7" strokeWidth="2" /></Icon></StackTool>
            <StackTool type="button" aria-label="Show end result" $on><Icon size={14}><path d="M7 3h6v3h-1v9h1v2H7v-2h1V6H7z" fill="#fff" /></Icon></StackTool>
            <StackTool type="button" aria-label="Make unique"><Icon size={14}><path d="M3 4l7 9 7-9" stroke="#111" strokeWidth="2" /><circle cx="10" cy="14" r="3" fill="#fff" /></Icon></StackTool>
            <StackTool type="button" aria-label="Remove modifier"><Icon size={14}><path d="M5 8h9v6q-4 4-9 0z" fill="#fff" /><path d="M8 5l6-3 2 4" /></Icon></StackTool>
            <StackTool type="button" aria-label="Configure modifier sets"><Icon size={14}><path d="M2 2h13v15H2z" fill="#fff" stroke="#2a2a9a" /><path d="M2 4h13" stroke="#2a2a9a" strokeWidth="3" /><path d="M9 9h9v9H9z" fill="#fff" stroke="#2a2a9a" /><path d="M11 13h5M14 11l2 2-2 2" stroke="#222" /></Icon></StackTool>
          </StackTools>

          <RolloutArea>
            <Rollout>
              <RolloutTitle type="button">- Coordinate Systems</RolloutTitle>
              <Group $top={5} $bottom={7}>
                <Legend>Hair Coordsys (Cen</Legend>
                <Choices>
                  <Choice><Radio type="radio" name="coords" />(Mesh Vertex.</Choice>
                  <Choice><Radio type="radio" name="coords" defaultChecked />(Curve Base.</Choice>
                  <Choice $off><Radio type="radio" name="coords" disabled />(Vector Base.</Choice>
                </Choices>
                <PickedInput aria-label="Picked object" defaultValue="No Objects Selected" />
                <ButtonPair>
                  <PushButton type="button">Select</PushButton>
                  <PushButton type="button">New</PushButton>
                </ButtonPair>
              </Group>
              <Group $top={7} $bottom={5}>
                <Legend>Vertex Coordsys</Legend>
                <SmallNote>0x At Vertex Points To</SmallNote>
                <PushButton type="button" disabled $tall>Object's Oz</PushButton>
              </Group>
              <Group $top={6} $bottom={2}>
                <Legend>Hair -&gt; Vertex Tra</Legend>
                <Choices $inline>
                  <Choice $tight><Radio type="radio" name="transfer" />XForm</Choice>
                  <Choice $tight><Radio type="radio" name="transfer" defaultChecked />Rotati</Choice>
                </Choices>
              </Group>
              <GizmoRow>
                Gizmo Size
                <GizmoInput defaultValue="20.0" />
                <Spin />
              </GizmoRow>
            </Rollout>
            <ScrollThumb />
          </RolloutArea>
        </CommandPanel>
      </Workspace>

      <StatusArea>
        <StatusMain>
          <StatusRow>
            <Readout $grow>25 Shapes Selected</Readout>
            <PlainButton type="button" aria-label="Selection lock"><Icon size={12}><path d="M3 9h14v10H3z" fill="currentColor" /><path d="M6 9V5q4-6 8 0v4" strokeWidth="2" /></Icon></PlainButton>
            <PlainButton type="button" aria-label="Absolute or offset mode"><Icon size={12}><path d="M2 11L18 3l-6 14-3-6z" /></Icon></PlainButton>
            {["X", "Y", "Z"].map((axis) => (
              <Coord key={axis}>{axis}:<CoordInput /></Coord>
            ))}
            <Readout $width={75}>Grid = 10.0</Readout>
          </StatusRow>
          <StatusRow>
            <Readout $grow>Click and drag to select and move objects</Readout>
            <Readout $width={75}>Add Time Tag</Readout>
          </StatusRow>
        </StatusMain>
        <KeyButton type="button" aria-label="Set keys">
          <svg width="20" height="12" viewBox="0 0 20 12" fill="none" stroke="currentColor" strokeWidth="2"><circle cx="5" cy="6" r="4" /><path d="M9 6h10M14 6v4M18 6v4" /></svg>
        </KeyButton>
        <KeyGrid>
          <FlatButton type="button" $clipStart>Auto Key</FlatButton>
          <Combo label="Key set" value="Selected" />
          <FlatButton type="button">Set Key</FlatButton>
          <FlatButton type="button">Key Filters...</FlatButton>
        </KeyGrid>
        <Transport>
          <TransportRow>
            <PlainButton $w={18} type="button" aria-label="Go to start"><PlayIcon d={play.start} /></PlainButton>
            <PlainButton $w={18} type="button" aria-label="Previous frame"><PlayIcon d={play.prev} /></PlainButton>
            <PlainButton $w={18} type="button" aria-label="Play"><Icon size={14} flyout><path d="M1 2h18v16H1z" /><path d="M7 5l8 5-8 5z" fill="currentColor" /></Icon></PlainButton>
            <PlainButton $w={18} type="button" aria-label="Next frame"><PlayIcon d={play.next} /></PlainButton>
            <PlainButton $w={18} type="button" aria-label="Go to end"><PlayIcon d={play.end} /></PlainButton>
          </TransportRow>
          <TransportRow>
            <PlainButton $w={18} type="button" aria-label="Key mode"><PlayIcon size={10} d="M2 4v12M18 4v12M3 10l7-5v10zM17 10l-7-5v10z" /></PlainButton>
            <FrameInput aria-label="Frame" defaultValue="0" />
            <Spin />
            <PlainButton $w={16} type="button" aria-label="Time configuration"><Icon size={12}><path d="M2 2h12v14H2zM2 6h12M5 9h4" /><circle cx="13" cy="13" r="5" fill={c.panel} /><path d="M13 10v3h3" /></Icon></PlainButton>
          </TransportRow>
        </Transport>
        <NavGrid>
          {nav.map(([label, art, fly]) => (
            <PlainButton $w={17} key={label} type="button" aria-label={label}><Icon size={14} flyout={fly}>{art}</Icon></PlainButton>
          ))}
        </NavGrid>
      </StatusArea>

      <TaskBar>
        <TaskButton type="button" $start>{taskIcons.flag}<Han>开始</Han></TaskButton>
        {tasks.map(([icon, label, tone]) => (
          <TaskButton key={label} type="button" $tone={tone}>
            {icon === "max" ? <MaxLogo /> : taskIcons[icon]}
            <span>{withHan(label)}</span>
          </TaskButton>
        ))}
        <Tray>
          <svg width="12" height="12" viewBox="0 0 12 12"><path d="M1 5h10v6H1z" fill="#f5c21a" /><path d="M3 5V3q3-4 6 0v2" fill="none" stroke="#d89a10" strokeWidth="2" /><path d="M3 8h6" stroke="#333" /></svg>
          <NetIcon />
          <NetIcon />
          <svg width="10" height="10" viewBox="0 0 10 10"><circle cx="5" cy="5" r="4" fill="#aaa" stroke="#555" strokeWidth="2" /><path d="M4 3l3 2-3 2z" fill="#fff" /></svg>
          <Clock>17:46</Clock>
        </Tray>
      </TaskBar>
    </Page>
  );
}
